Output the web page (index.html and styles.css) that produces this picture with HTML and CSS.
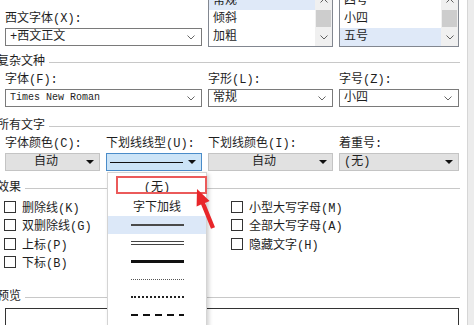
FILE: index.html
```html
<!DOCTYPE html>
<html lang="zh-CN">
<head>
    <meta charset="UTF-8">
    <meta name="viewport" content="width=device-width, initial-scale=1.0">
    <title>字体</title>
    <link rel="stylesheet" href="styles.css">
</head>
<body>
    <div class="screen">
        <div class="dialog">
            <!-- top: 西文字体 + lists -->
            <div class="grid4 top-row">
                <div class="field span2">
                    <div class="label">西文字体(X):</div>
                    <div class="select">
                        <span>+西文正文</span>
                        <svg class="chev" width="8" height="5" viewBox="0 0 8 5"><polyline points="0.5,0.5 4,4 7.5,0.5" fill="none" stroke="#666" stroke-width="1"/></svg>
                    </div>
                </div>
                <div class="listbox">
                    <div class="items">
                        <div class="item selected">常规</div>
                        <div class="item">倾斜</div>
                        <div class="item">加粗</div>
                    </div>
                    <div class="scrollbar">
                        <div class="sb-btn"><svg width="8" height="5" viewBox="0 0 8 5"><polyline points="0.5,4.5 4,1 7.5,4.5" fill="none" stroke="#606060"/></svg></div>
                        <div class="sb-track"><div class="sb-thumb"></div></div>
                        <div class="sb-btn"><svg width="8" height="5" viewBox="0 0 8 5"><polyline points="0.5,0.5 4,4 7.5,0.5" fill="none" stroke="#606060"/></svg></div>
                    </div>
                </div>
                <div class="listbox">
                    <div class="items">
                        <div class="item">四号</div>
                        <div class="item">小四</div>
                        <div class="item selected">五号</div>
                    </div>
                    <div class="scrollbar">
                        <div class="sb-btn"><svg width="8" height="5" viewBox="0 0 8 5"><polyline points="0.5,4.5 4,1 7.5,4.5" fill="none" stroke="#606060"/></svg></div>
                        <div class="sb-track"><div class="sb-thumb"></div></div>
                        <div class="sb-btn"><svg width="8" height="5" viewBox="0 0 8 5"><polyline points="0.5,0.5 4,4 7.5,0.5" fill="none" stroke="#606060"/></svg></div>
                    </div>
                </div>
            </div>

            <div class="section-head"><span>复杂文种</span></div>
            <div class="grid4">
                <div class="field span2">
                    <div class="label">字体(F):</div>
                    <div class="select">
                        <span class="mono">Times New Roman</span>
                        <svg class="chev" width="8" height="5" viewBox="0 0 8 5"><polyline points="0.5,0.5 4,4 7.5,0.5" fill="none" stroke="#666"/></svg>
                    </div>
                </div>
                <div class="field">
                    <div class="label">字形(L):</div>
                    <div class="select">
                        <span>常规</span>
                        <svg class="chev" width="8" height="5" viewBox="0 0 8 5"><polyline points="0.5,0.5 4,4 7.5,0.5" fill="none" stroke="#666"/></svg>
                    </div>
                </div>
                <div class="field">
                    <div class="label">字号(Z):</div>
                    <div class="select">
                        <span>小四</span>
                        <svg class="chev" width="8" height="5" viewBox="0 0 8 5"><polyline points="0.5,0.5 4,4 7.5,0.5" fill="none" stroke="#666"/></svg>
                    </div>
                </div>
            </div>

            <div class="section-head head-all"><span>所有文字</span></div>
            <div class="grid4 row-all">
                <div class="field">
                    <div class="label">字体颜色(C):</div>
                    <div class="drop"><span class="drop-text">自动</span><span class="tri"></span></div>
                </div>
                <div class="field">
                    <div class="label">下划线线型(U):</div>
                    <div class="drop active"><span class="drop-line"></span><span class="tri"></span></div>
                </div>
                <div class="field">
                    <div class="label">下划线颜色(I):</div>
                    <div class="drop"><span class="drop-text">自动</span><span class="tri"></span></div>
                </div>
                <div class="field">
                    <div class="label">着重号:</div>
                    <div class="drop"><span class="drop-text left">(无)</span><span class="tri"></span></div>
                </div>
            </div>

            <div class="section-head head-effects"><span>效果</span></div>
            <div class="effects">
                <div class="checks">
                    <div class="check"><span class="box"></span>删除线(K)</div>
                    <div class="check"><span class="box"></span>双删除线(G)</div>
                    <div class="check"><span class="box"></span>上标(P)</div>
                    <div class="check"><span class="box"></span>下标(B)</div>
                </div>
                <div class="checks">
                    <div class="check"><span class="box"></span>小型大写字母(M)</div>
                    <div class="check"><span class="box"></span>全部大写字母(A)</div>
                    <div class="check"><span class="box"></span>隐藏文字(H)</div>
                </div>
            </div>

            <div class="section-head head-preview"><span>预览</span></div>
            <div class="preview"></div>
        </div>
        <div class="side-strip"></div>

        <!-- open underline list -->
        <div class="dropdown-list">
            <div class="opt text">(无)</div>
            <div class="opt text">字下加线</div>
            <div class="opt hover"><span class="ul ul-single"></span></div>
            <div class="opt"><span class="ul ul-double"></span></div>
            <div class="opt"><span class="ul ul-thick"></span></div>
            <div class="opt"><span class="ul ul-dotted"></span></div>
            <div class="opt"><span class="ul ul-dotted-heavy"></span></div>
            <div class="opt"><span class="ul ul-dashed"></span></div>
        </div>

        <!-- annotation -->
        <div class="mark-box"></div>
        <svg class="mark-arrow" width="30" height="48" viewBox="190 185 30 48">
            <polygon points="197,189 209.6,201.1 205.1,203 215,227.2 211,228.8 201.1,204.6 196.6,206.5" fill="#e8262a"/>
        </svg>
    </div>
</body>
</html>
```

FILE: styles.css
```css
/* Page */
body {
    margin: 0;
    background-color: #fff;
    font-family: "Liberation Mono", "Noto Sans CJK SC", monospace;
    font-size: 12px;
    color: #1e1e1e;
}

.screen {
    position: relative;
    display: flex;
    width: 474px;
    height: 325px;
    overflow: hidden;
}

.dialog {
    width: 454px;
    padding: 0 8px 0 5px;
    margin-top: -9px;
}

.side-strip {
    width: 6px;
    background-color: #ececec;
    border-left: 1px solid #d6d6d6;
}

/* Grid of fields */
.grid4 {
    display: grid;
    grid-template-columns: 95px 96px 125px 120px;
    column-gap: 6px;
}

.span2 {
    grid-column: span 2;
}

.top-row {
    align-items: end;
}

.top-row .field {
    margin-bottom: 1px;
}

.label {
    line-height: 16px;
    margin-bottom: 1px;
    white-space: nowrap;
}

.select {
    display: flex;
    align-items: center;
    justify-content: space-between;
    height: 18px;
    box-sizing: border-box;
    border: 1px solid #7a7a7a;
    background-color: #fff;
    padding: 0 6px 0 4px;
    line-height: 16px;
}

.mono {
    font-size: 10px;
}

.chev {
    display: block;
}

/* List boxes */
.listbox {
    display: flex;
    height: 56px;
    box-sizing: border-box;
    border: 1px solid #828790;
    background-color: #fff;
}

.items {
    flex: 1;
}

.item {
    height: 18px;
    line-height: 18px;
    padding-left: 4px;
}

.item.selected {
    background-color: #dfe9f8;
}

.scrollbar {
    display: flex;
    flex-direction: column;
    width: 17px;
    background-color: #f0f0f0;
}

.sb-btn {
    display: flex;
    align-items: center;
    justify-content: center;
    height: 17px;
}

.sb-track {
    flex: 1;
}

.sb-thumb {
    height: 17px;
    margin: 1px 1px 0;
    background-color: #cdcdcd;
}

/* Section headings */
.section-head {
    display: flex;
    align-items: center;
    line-height: 16px;
    margin: 7px -1px 2px -8px;
}

.section-head::after {
    content: "";
    flex: 1;
    height: 1px;
    margin-left: 4px;
    background-color: #c8c8c8;
}

.head-all {
    margin-top: 11px;
}

.head-effects {
    margin-top: 9px;
}

.head-preview {
    margin-top: 18px;
}

/* Drop buttons */
.drop {
    display: flex;
    align-items: center;
    height: 18px;
    box-sizing: border-box;
    border: 1px solid #c4c4c4;
    background-color: #e1e1e1;
    line-height: 16px;
}

.drop-text {
    flex: 1;
    text-align: center;
}

.drop-text.left {
    text-align: left;
    padding-left: 4px;
}

.drop.active {
    background-color: #cce4f7;
    border-color: #4a8cc9;
}

.drop-line {
    flex: 1;
    height: 1px;
    margin: 0 5px 0 3px;
    background-color: #111;
}

.tri {
    width: 0;
    height: 0;
    margin-right: 5px;
    border-left: 4px solid transparent;
    border-right: 4px solid transparent;
    border-top: 4px solid #111;
}

/* Effects */
.effects {
    display: flex;
    margin-top: 2px;
}

.checks {
    width: 228px;
}

.check {
    display: flex;
    align-items: center;
    gap: 6px;
    height: 18.3px;
    margin-left: -1px;
    white-space: nowrap;
}

.box {
    width: 10px;
    height: 10px;
    border: 1px solid #333;
    background-color: #fff;
}

.preview {
    height: 40px;
    margin-top: 3px;
    border: 1px solid #333;
}

/* Open dropdown */
.dropdown-list {
    position: absolute;
    left: 107px;
    top: 172px;
    width: 98px;
    height: 170px;
    padding-top: 3px;
    background-color: #fff;
    border: 1px solid #d4d4d4;
    box-shadow: 2px 2px 4px rgba(0, 0, 0, 0.18);
}

.opt {
    display: flex;
    align-items: center;
    justify-content: center;
    height: 18px;
}

.opt.text {
    height: 20px;
}

.opt.hover {
    background-color: #dce8f8;
}

.ul {
    display: block;
    width: 53px;
}

.ul-single {
    height: 2px;
    background-color: #4a4a4a;
}

.ul-double {
    height: 2px;
    border-top: 1px solid #444;
    border-bottom: 1px solid #444;
}

.ul-thick {
    height: 3px;
    background-color: #111;
}

.ul-dotted {
    border-top: 1px dotted #555;
}

.ul-dotted-heavy {
    border-top: 2px dotted #222;
}

.ul-dashed {
    height: 2px;
    background: repeating-linear-gradient(90deg, #111 0 7px, transparent 7px 12px);
}

/* Annotation */
.mark-box {
    position: absolute;
    left: 116px;
    top: 176px;
    width: 91px;
    height: 18px;
    box-sizing: border-box;
    border: 2px solid #eb5a5a;
}

.mark-arrow {
    position: absolute;
    left: 190px;
    top: 185px;
}
```
